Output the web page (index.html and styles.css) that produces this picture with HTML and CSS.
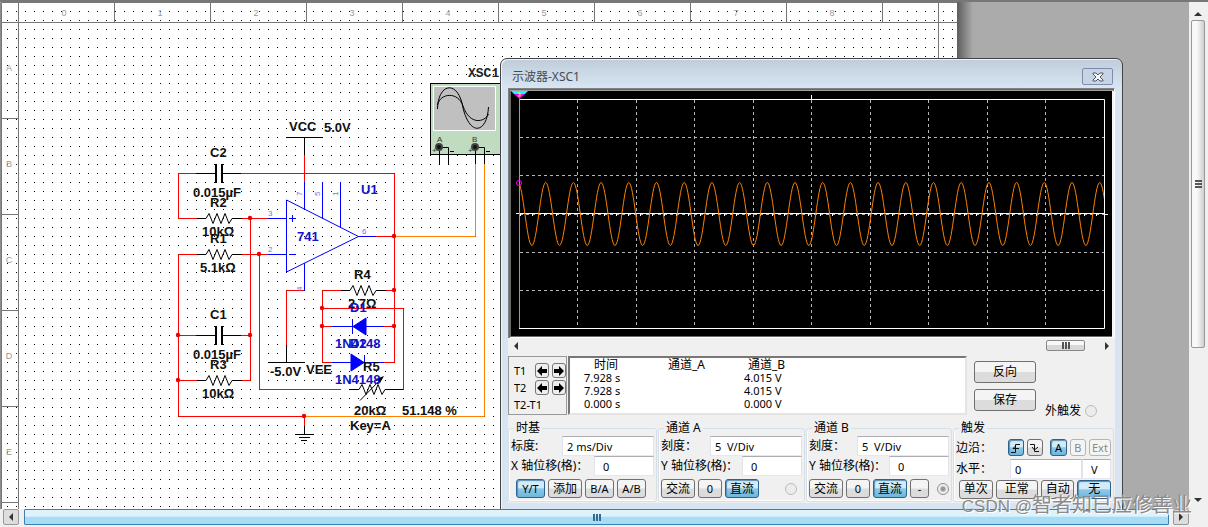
FILE: index.html
```html
<!DOCTYPE html>
<html lang="zh-CN">
<head>
<meta charset="utf-8">
<title>示波器-XSC1</title>
<link rel="stylesheet" href="styles.css">
</head>
<body>
<main class="app">
  <section class="workspace">
    <svg class="sheet" width="974" height="509" viewBox="0 0 974 509" role="img" aria-label="电路图">
      <defs>
        <pattern id="grid" x="7" y="11" width="9" height="9" patternUnits="userSpaceOnUse"><rect width="1" height="1" fill="#000"/></pattern>
        <linearGradient id="edge"><stop offset="0" stop-color="#5c5c5c"/><stop offset="1" stop-color="#ababab"/></linearGradient>
        <g id="res"><path class="k" d="M-28 0.5H-19L-16 -4.500L-12 5.500L-8 -4.500L-4 5.500L0 -4.500L4 5.500L7 0.500H17"/></g>
        <g id="cap"><path class="k" d="M-27 .5H-8M1 .5H18"/><path class="plate" d="M-7 -9V10M-1 -9V10"/></g>
      </defs>
      <rect x="957" y="2" width="16" height="507" fill="url(#edge)"/>
      <rect x="1" y="2" width="956" height="507" fill="#fff"/>
      <rect x="4" y="6" width="952" height="503" fill="url(#grid)"/>
      <g class="rule">
        <path d="M1.500 509V2.500H957M2 22.500H957M18.500 2V509M938.500 2V509M114.500 2V22M210.500 2V22M306.500 2V22M402.500 2V22M498.500 2V22M594.500 2V22M690.500 2V22M786.500 2V22M882.500 2V22M2 118.500H18M2 214.500H18M2 310.500H18M2 406.500H18M2 502.500H18"/>
      </g>
      <g class="ruletext">
        <text x="64" y="16">0</text><text x="160" y="16">1</text><text x="256" y="16">2</text><text x="352" y="16">3</text><text x="448" y="16">4</text><text x="544" y="16">5</text><text x="640" y="16">6</text><text x="736" y="16">7</text><text x="832" y="16">8</text>
        <text x="9" y="71">A</text><text x="9" y="167">B</text><text x="9" y="263">C</text><text x="9" y="359">D</text><text x="9" y="455">E</text>
      </g>
      <g class="red">
        <path d="M197 173.500H178.500V218.500H197M241 173.500H394.500V362.500H384M304.500 155V182M241 218.500H268M241 254.500H268M250.500 218V380.500H241M197 254.500H178.500V416.500H304.500V426M178 335.500H197M241 335.500H250M178 380.500H197M259.500 254V389.500H341M304 290.500H286.500V345M376 236.500H394M341 290.500H322.500V362.500H332M322 308.500H403.500V389.500M322 326.500H332M384 326.500H394M385 290.500H394"/>
      </g>
      <path class="orange" d="M394 236.500H475.500V164M484.500 164V416.500H305"/>
      <g class="dots">
        <circle cx="250" cy="218" r="2.200"/><circle cx="259" cy="254" r="2.200"/><circle cx="394" cy="236" r="2.200"/><circle cx="394" cy="290" r="2.200"/><circle cx="322" cy="308" r="2.200"/><circle cx="322" cy="326" r="2.200"/><circle cx="394" cy="326" r="2.200"/><circle cx="178" cy="335" r="2.200"/><circle cx="250" cy="335" r="2.200"/><circle cx="178" cy="380" r="2.200"/><circle cx="304" cy="416" r="2.200"/>
      </g>
      <use href="#cap" x="223" y="173"/><use href="#cap" x="223" y="335"/>
      <use href="#res" x="225" y="218"/><use href="#res" x="225" y="254"/><use href="#res" x="225" y="380"/><use href="#res" x="369" y="290"/><use href="#res" x="378" y="389"/>
      <path class="k" d="M286 137.500H323M304.500 137V155M268 362.500H305M286.500 345V362M394 389.500H403M360 400.500L381 379M295 434.500H314M304.500 426V434M299 437.500H310M301 440.500H307"/>
      <path d="M384 376L376 379L380 383Z"/>
      <g class="blue">
        <path d="M286.500 200V272L358.500 236.500ZM304.500 182V209M322.500 182V218M340.500 182V227M268 218.500H286M268 254.500H286M358 236.500H376M304.500 263V290.500M289 218.500H296M292.500 215V222M289 254.500H296M332 326.500H384M332 362.500H384M352.500 319V334M364.500 355V370"/>
        <path class="fill" d="M353 326.500L366 318V335ZM364 362.500L351 354V371Z"/>
      </g>
      <g class="pin"><text x="268" y="216">3</text><text x="268" y="252">2</text><text x="362" y="234">6</text><text transform="translate(302 196) rotate(-90)">7</text><text transform="translate(320 196) rotate(-90)">5</text><text transform="translate(338 196) rotate(-90)">1</text><text transform="translate(302 291) rotate(-90)">4</text></g>
      <g class="part">
        <text x="289" y="131">VCC</text><text x="324" y="132">5.0V</text><text x="210" y="157">C2</text><text x="193" y="197">0.015µF</text><text x="210" y="207">R2</text><text x="202" y="236">10kΩ</text><text x="210" y="243">R1</text><text x="200" y="272">5.1kΩ</text><text x="210" y="319">C1</text><text x="193" y="359">0.015µF</text><text x="210" y="369">R3</text><text x="202" y="398">10kΩ</text><text x="270" y="376">-5.0V</text><text x="306" y="374">VEE</text><text x="354" y="279">R4</text><text x="348" y="308">2.7Ω</text><text x="363" y="371">R5</text><text x="354" y="415">20kΩ</text><text x="402" y="415">51.148 %</text><text x="350" y="430">Key=A</text>
        <g class="bluetext"><text x="361" y="194">U1</text><text x="297" y="241">741</text><text x="350" y="312">D1</text><text x="335" y="348">1N4148</text><text x="350" y="348">D2</text><text x="335" y="384">1N4148</text></g>
      </g>
      <text class="mono" x="468" y="77">XSC1</text>
      <rect x="430.500" y="83.500" width="90" height="71" fill="#c0dcc0" stroke="#000"/>
      <rect x="433.500" y="86.500" width="62" height="44" fill="#c0c0c0" stroke="#fff"/>
      <path class="k" d="M437.500 109C438 84 456 80 462 103C468 137 487 135 488.500 107M437.500 105C440 93 458 91 463 106C470 126 485 122 488.500 114M439.500 147V165M439 147.500H448.500V165M475.500 147V164M475 147.500H484.500V164M450 151.500H454M486 151.500H490"/>
      <g class="socket"><circle cx="439" cy="147" r="3"/><circle cx="475" cy="147" r="3"/></g>
      <g class="tiny"><text x="437" y="142">A</text><text x="472" y="142">B</text><text x="432" y="153">+</text><text x="468" y="153">+</text></g>
    </svg>

    <section class="window" aria-label="示波器-XSC1">
      <header class="titlebar"><h1>示波器-XSC1</h1>
        <button class="close" aria-label="关闭"><svg width="12" height="10" viewBox="0 0 12 10"><path d="M1 1H4L6 3L8 1H11V2L8 5L11 8V9H8L6 7L4 9H1V8L4 5L1 2Z" fill="#f5f7fa" stroke="#505768"/></svg></button>
      </header>
      <div class="panel">
        <svg class="scope" viewBox="508 88 607 250" role="img" aria-label="波形">
          <defs><clipPath id="plot"><rect x="519" y="99" width="585" height="230"/></clipPath></defs>
          <rect x="508" y="88" width="607" height="250" fill="#fff"/>
          <path d="M508 88H1115L1113 90H510V338H508Z" fill="#808080"/>
          <rect x="509" y="89" width="605" height="248" fill="#696969"/><rect x="510" y="90" width="603" height="1" fill="#a0a0a0"/><rect x="1112" y="91" width="2" height="246" fill="#f4f4f4"/><rect x="511" y="91" width="601" height="245"/>
          <path class="gridline" d="M577.500 100V328M636.500 100V328M694.500 100V328M753.500 100V328M811.500 100V328M870.500 100V328M928.500 100V328M987.500 100V328M1045.500 100V328M520 137.500H1104M520 175.500H1104M520 252.500H1104M520 290.500H1104M520 214.500H1104"/>
          <path class="axis" d="M519 99.500H1104.500V328.500H519M516 213.500H1104M1104 214.500H1108M811.500 95V99"/>
          <path class="ticks" d="M520 215H1104"/>
          <path d="M519.500 98V328" stroke="#00ff21"/>
          <g clip-path="url(#plot)"><path id="wave" class="wave" d=""/></g>
          <path d="M511 91H528L525 94H514Z" fill="#0ff"/><path d="M514 94H525L519.500 99Z" fill="#f0f"/><path d="M518 93H520V96H518" fill="none" stroke="#ff0"/>
          <circle cx="519" cy="183" r="2.500" fill="none" stroke="#f0f"/>
        </svg>
        <div class="timebar"><i class="tri left"></i><span class="timethumb grip"></span><i class="tri right"></i></div>
        <div class="readout">
          <div class="cursors">
            <span>T1</span><button aria-label="T1 左移"><svg viewBox="0 0 10 10"><path d="M0 5L5 0V3H10V7H5V10Z"/></svg></button><button aria-label="T1 右移"><svg viewBox="0 0 10 10"><path d="M10 5L5 0V3H0V7H5V10Z"/></svg></button>
            <span>T2</span><button aria-label="T2 左移"><svg viewBox="0 0 10 10"><path d="M0 5L5 0V3H10V7H5V10Z"/></svg></button><button aria-label="T2 右移"><svg viewBox="0 0 10 10"><path d="M10 5L5 0V3H0V7H5V10Z"/></svg></button>
            <span class="delta">T2-T1</span>
          </div>
          <div class="values">
            <table>
              <thead><tr><th>时间</th><th>通道_A</th><th>通道_B</th></tr></thead>
              <tbody><tr><td>7.928 s</td><td></td><td>4.015 V</td></tr><tr><td>7.928 s</td><td></td><td>4.015 V</td></tr><tr><td>0.000 s</td><td></td><td>0.000 V</td></tr></tbody>
            </table>
          </div>
          <div class="actions"><button>反向</button><button>保存</button></div>
          <label class="external">外触发<input type="radio" name="ext" disabled></label>
        </div>
        <div class="groups">
          <fieldset><legend>时基</legend>
            <div class="field"><label for="tb">标度:</label><input class="wide" id="tb" value="2 ms/Div"></div>
            <div class="field"><label for="xp">X 轴位移(格)：</label><input id="xp" value="0"></div>
            <div class="buttons first"><button class="on">Y/T</button><button class="cjk">添加</button><button>B/A</button><button>A/B</button></div>
          </fieldset>
          <fieldset><legend>通道 A</legend>
            <div class="field"><label for="as">刻度：</label><input class="wide" id="as" value="5  V/Div"></div>
            <div class="field"><label for="ap">Y 轴位移(格)：</label><input id="ap" value="0"></div>
            <div class="buttons"><button class="cjk">交流</button><button class="zero">0</button><button class="on cjk">直流</button><input type="radio" name="cha" aria-label="通道 A" disabled></div>
          </fieldset>
          <fieldset><legend>通道 B</legend>
            <div class="field"><label for="bs">刻度：</label><input class="wide" id="bs" value="5  V/Div"></div>
            <div class="field"><label for="bp">Y 轴位移(格)：</label><input id="bp" value="0"></div>
            <div class="buttons"><button class="cjk">交流</button><button class="zero">0</button><button class="on cjk">直流</button><button class="minus">-</button><input type="radio" name="chb" aria-label="通道 B" checked></div>
          </fieldset>
          <fieldset><legend>触发</legend>
            <div class="field edge"><span>边沿：</span>
              <button class="on" aria-label="上升沿"><svg viewBox="0 0 12 12"><path d="M1 10.500H5.500V2.500H10M3 6.500H9M5.500 4L3 6.500"/></svg></button><button class="second" aria-label="下降沿"><svg viewBox="0 0 12 12"><path d="M1 2.500H5.500V9.500H10M3 5L5.500 8L9 5"/></svg></button><button class="on">A</button><button disabled>B</button><button disabled class="ext">Ext</button></div>
            <div class="field level"><label for="lv">水平：</label><input id="lv" value="0"><input class="unit" aria-label="单位" value="V"></div>
            <div class="buttons modes"><button class="cjk">单次</button><button class="cjk">正常</button><button class="cjk">自动</button><button class="on cjk">无</button></div>
          </fieldset>
        </div>
      </div>
    </section>
  </section>
  <div class="vscroll"><i class="tri up"></i><span class="vthumb"></span><i class="tri down"></i></div>
  <div class="hscroll"><span class="step"><i class="tri left"></i></span><span class="hthumb grip"></span><span class="step"><i class="tri right"></i></span></div>
  <p class="watermark"><span>CSDN @</span>智者知已应修善业</p>
</main>
<script src="wave.js"></script>
</body>
</html>
```
FILE: styles.css
```css
* { box-sizing: border-box; }
body { margin: 0; font: 12px/16px "Noto Sans", "Noto Sans CJK SC", sans-serif; color: #000; }
button, input { font: inherit; margin: 0; color: inherit; }
.app { position: relative; height: 100vh; display: grid; grid-template: minmax(0, 1fr) 18px / minmax(0, 1fr) 19px; background: #f0f0f0; overflow: hidden; }
.workspace { position: relative; overflow: hidden; background: #ababab; border-top: 2px solid #777; border-left: 1px solid #8c8c8c; }
.sheet { display: block; margin: -2px 0 0 -1px; }

.k { fill: none; stroke: #000; }
.plate { fill: none; stroke: #000; stroke-width: 2; }
.rule path { fill: none; stroke: #777; }
.ruletext { font: 9px "Liberation Sans", sans-serif; fill: #999; text-anchor: middle; }
.red path { fill: none; stroke: #f00; }
.orange { fill: none; stroke: #ff8000; }
.dots { fill: #e00; }
.blue path { fill: none; stroke: #00f; }
.blue .fill { fill: #00f; }
.pin { font: 8px "Liberation Sans", sans-serif; fill: #7070f0; }
.part { font: bold 13px "Liberation Sans", sans-serif; fill: #111; }
.bluetext { fill: #11c; }
.mono { font: bold 13px "Liberation Mono", monospace; fill: #222; }
.tiny { font: 8px "Liberation Sans", sans-serif; fill: #333; }
.socket { fill: #111; stroke: #444; stroke-width: 2; }

.window { position: absolute; left: 499px; top: 56px; width: 623px; padding: 0 7px 8px; border: 1px solid #444; border-radius: 7px 7px 0 0; background: linear-gradient(#bfcddb, #d7e4f2 28px); box-shadow: inset 1px 1px #eef4fa; }
.titlebar { display: flex; height: 29px; align-items: center; justify-content: space-between; padding: 6px 2px 0 4px; }
h1 { margin: 0; font: 12px/20px "Noto Sans", "Noto Sans CJK SC", sans-serif; color: #444b55; }
.close { width: 31px; height: 17px; padding: 0; border: 1px solid #7e8caf; border-radius: 2px; background: #c6d4e3; display: grid; place-items: center; }
.panel { background: #f0f0f0; }
.scope { display: block; width: 100%; }
.gridline { fill: none; stroke: #b4b4b4; stroke-dasharray: 3 3; }
.axis { fill: none; stroke: #fff; }
.ticks { stroke: #fff; stroke-width: 2; stroke-dasharray: 1 11; }
.wave { fill: none; stroke: #ff8000; }

.tri { width: 0; height: 0; border: 4px solid transparent; }
.tri.left { border-right-color: #333; border-left: 0; }
.tri.right { border-left-color: #333; border-right: 0; }
.tri.up { border-bottom-color: #333; border-top: 0; }
.tri.down { border-top-color: #333; border-bottom: 0; }
.timebar { display: flex; align-items: center; height: 15px; padding: 0 6px; }
.timethumb { width: 39px; height: 11px; margin: 0 20px 0 auto; border: 1px solid #888; border-radius: 2px; background: linear-gradient(#f8f8f8 45%, #d8d8d8 50%); }
.grip::after { content: ""; display: block; width: 8px; height: 7px; margin: 1px auto; background: repeating-linear-gradient(90deg, #555 0 2px, transparent 2px 3px); }

.readout { display: flex; height: 59px; margin-top: 3px; }
.cursors { display: grid; grid-template: 17px 17px 17px / 17px 13px 13px; column-gap: 4px; align-items: center; width: 59px; flex: none; padding: 5px 4px 0 5px; border: 1px solid #999; font-size: 11px; }
.cursors button { width: 14px; height: 15px; padding: 1px; border: 1px solid #777; border-radius: 3px; background: #eee; display: grid; place-items: center; }
.cursors button svg { width: 10px; height: 10px; }
.delta { grid-column: 1 / -1; }
.values { flex: 1; margin-left: 1px; background: #fff; border: 2px solid; border-color: #777 #e4e4e4 #e4e4e4 #777; }
table { border-collapse: collapse; margin-left: 14px; font-size: 11px; line-height: 13px; }
tr { height: 13px; }
th { font: 12px/13px "Noto Sans", "Noto Sans CJK SC", sans-serif; text-align: left; padding: 0 0 0 4px; }
th:first-child { padding-left: 10px; }
td { padding: 0; height: 13px; }
th:nth-child(1), td:nth-child(1) { width: 80px; }
th:nth-child(2), td:nth-child(2) { width: 80px; }
.actions { display: flex; flex-direction: column; gap: 6px; padding: 5px 9px 0 7px; }
.actions button { width: 62px; height: 22px; }
.external { display: flex; align-self: flex-end; gap: 4px; align-items: center; padding: 0 18px 0 0; white-space: nowrap; margin-bottom: -4px; }

.groups { display: grid; grid-template-columns: 150fr 148fr 147fr 162fr; padding-top: 5px; }
fieldset { min-width: 0; margin: 0 1px 1px 0; padding: 0 2px 2px 2px; border: 1px solid #d5dfe5; border-radius: 3px; box-shadow: inset 1px -1px #fff; }
legend { margin-left: 3px; padding: 0 2px; line-height: 16px; }
.field { display: flex; justify-content: space-between; align-items: center; height: 20px; white-space: nowrap; }
.field label { flex: none; }
.field input { width: 60px; height: 20px; padding: 0 8px; border: 1px solid; border-color: #abadb3 #e2e3ea #e3e9ef; background: #fff; font-size: 11px; white-space: pre; }
.field .wide { width: 92px; padding: 0 4px; }
.field label + input { margin-left: auto; }
.buttons { display: flex; gap: 3px; align-items: center; padding: 2px 0 0; height: 23px; }
.buttons.first { padding-left: 5px; }
button { border: 1px solid #707070; border-radius: 3px; background: linear-gradient(#f4f4f4 48%, #dcdcdc 52%); padding: 0; }
.buttons button { width: 29px; height: 19px; font-size: 11px; line-height: 16px; }
.buttons .cjk { width: 34px; font-size: 12px; }
.buttons .zero { width: 24px; }
.buttons .minus { width: 19px; }
button.on { border-color: #2c628b; background: linear-gradient(#d3ebf8 45%, #8cc8e8 52%, #6db6de); box-shadow: inset 1px 1px 1px #5e8fae; }
button:disabled { color: #8a8a8a; border-color: #b4b4b4; background: #f4f4f4; }
input[type="radio"] { appearance: none; width: 12px; height: 12px; border: 1px solid #bcbcbc; border-radius: 50%; background: #ececec; }
input[type="radio"]:checked { border-color: #8e8f8f; background: radial-gradient(#999 25%, #eee 50%); }
.buttons input { margin: 0 5px 0 auto; }
.minus + input { margin-right: 0; }
.edge { gap: 3px; justify-content: flex-start; height: 23px; }
.edge span { width: 51px; }
.edge button { width: 17px; height: 17px; font-size: 11px; line-height: 14px; }
.edge .second { margin-right: 4px; }
.edge svg { display: block; width: 12px; height: 12px; margin: auto; fill: none; stroke: #111; }
.edge .ext { width: 23px; }
.level input { width: 72px; padding: 0 4px; }
.level .unit { width: 29px; padding: 0 8px; }
.modes button:nth-child(2) { width: 43px; }
.modes { height: 20px; padding: 0 0 0 3px; }

.vscroll { display: flex; flex-direction: column; align-items: center; padding: 10px 3px 7px 2px; border-top: 2px solid #777; background: #f0f0f0; }
.vthumb { align-self: stretch; flex: 0 0 67%; margin-top: 4px; border: 1px solid #999; border-radius: 2px; background: linear-gradient(90deg, #f8f8f8 40%, #cfcfcf); display: grid; place-items: center; }
.vthumb::after { content: ""; width: 7px; height: 8px; background: repeating-linear-gradient(#555 0 2px, transparent 2px 3px); }
.down { margin-top: auto; }
.hscroll { grid-column: 1 / -1; display: flex; gap: 4px; padding: 0 19px 2px 3px; background: #f0f0f0; }
.hthumb { flex: 1; margin-left: 1px; border: 1px solid #3c7fb1; border-radius: 1px; background: linear-gradient(#dff2fc 45%, #a6dcf4 50%); }
.hthumb::after { margin-top: 4px; background: repeating-linear-gradient(90deg, #376b8d 0 2px, transparent 2px 3px); }
.step { width: 16px; border: 1px solid #999; border-radius: 2px; background: #ddd; display: grid; place-items: center; }
.watermark { position: absolute; right: 16px; bottom: 8px; margin: 0; font: 20px/24px "Noto Sans CJK SC", sans-serif; color: #8b8b8b; text-shadow: 1px 1px #fff; white-space: nowrap; }
.watermark span { font: 17px/24px "Liberation Sans", sans-serif; }
```
FILE: wave.js
```js
const cycle = ' s8.800 -63 13.850 -63 s8.800 63 13.850 63';
const start = 'M504.150 245.500';
document.getElementById('wave').setAttribute('d', start + cycle.replace('s8.800 -63', 'c5.050 0 8.800 -63') + cycle.repeat(21));
```
